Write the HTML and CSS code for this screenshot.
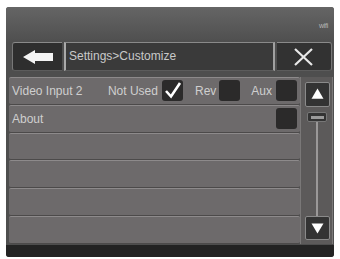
FILE: index.html
```html
<!DOCTYPE html>
<html>
<head>
<meta charset="utf-8">
<link rel="stylesheet" href="styles.css">
</head>
<body>
<div class="screen">
  <div class="status"><span class="wifi">wifi</span></div>
  <div class="nav">
    <div class="back">
      <svg width="50" height="28" viewBox="0 0 50 28"><path d="M10 14 L22 7 L22 10 L40 10 L40 18 L22 18 L22 21 Z" fill="#f4f4f4"/></svg>
    </div>
    <div class="title">Settings&gt;Customize</div>
    <div class="close">
      <svg width="55" height="28" viewBox="0 0 55 28"><path d="M18 6 L35 22 M35 6 L18 22" stroke="#e8e8e8" stroke-width="2.2" fill="none"/></svg>
    </div>
  </div>
  <div class="content">
    <div class="list">
      <div class="row">
        <span class="label">Video Input 2</span>
        <span class="opt opt-nu">Not Used</span>
        <span class="box"><svg width="21" height="21" viewBox="0 0 21 21"><path d="M4 11 L9 16.5 L18 3" stroke="#fff" stroke-width="2.6" fill="none"/></svg></span>
        <span class="opt opt-rev">Rev</span>
        <span class="box"></span>
        <span class="opt opt-aux">Aux</span>
        <span class="box"></span>
      </div>
      <div class="row">
        <span class="label">About</span>
        <span class="box"></span>
      </div>
      <div class="row"></div>
      <div class="row"></div>
      <div class="row"></div>
      <div class="row"></div>
    </div>
    <div class="scroll">
      <div class="sbtn"><svg width="25" height="25" viewBox="0 0 25 25"><path d="M12.5 6 L19 17 L6 17 Z" fill="#fff"/></svg></div>
      <div class="thumb"><span></span></div>
      <div class="track"><span></span></div>
      <div class="sbtn"><svg width="25" height="24" viewBox="0 0 25 24"><path d="M6 7 L19 7 L12.5 18 Z" fill="#fff"/></svg></div>
    </div>
  </div>
  <div class="bottom"></div>
</div>
</body>
</html>
```

FILE: styles.css
```css
html, body {
  margin: 0;
  padding: 0;
  background: #fff;
}
body {
  padding: 7px 0 0 6px;
  font-family: "Liberation Sans", Arial, sans-serif;
}
.screen {
  width: 328px;
  height: 250px;
  background: #4e4e4e;
  border-radius: 3px;
  display: flex;
  flex-direction: column;
  overflow: hidden;
}
.status {
  height: 35px;
  background: linear-gradient(#656565, #4f4f4f);
  display: flex;
  justify-content: flex-end;
  align-items: flex-start;
  padding-right: 6px;
}
.wifi {
  margin-top: 15px;
  font-size: 7px;
  color: #b8b8b8;
  letter-spacing: -0.3px;
}
.nav {
  height: 30px;
  display: flex;
  padding: 0 2px 0 6px;
  gap: 2px;
}
.nav > div {
  box-sizing: border-box;
  height: 29px;
  border-top: 1px solid #8a8a8a;
  border-bottom: 1px solid #5c5c5c;
}
.back {
  width: 50px;
  background: #2e2e2e;
  border-radius: 3px 0 0 3px;
  border-left: 1px solid #777;
}
.back svg, .close svg { display: block; }
.title {
  flex: 1;
  background: #3a3a3a;
  border-left: 2px solid #a9a9a9;
  border-right: 2px solid #a0a0a0;
  color: #c9c9c9;
  font-size: 12px;
  line-height: 27px;
  padding-left: 3px;
}
.close {
  width: 55px;
  background: #323232;
  border-radius: 0 3px 3px 0;
  border-right: 1px solid #777;
}
.content {
  display: flex;
  margin-top: 5px;
  height: 167px;
  padding-left: 3px;
}
.list {
  width: 291px;
  display: flex;
  flex-direction: column;
}
.row {
  box-sizing: border-box;
  height: 27.8px;
  background: #6d6a6b;
  border-top: 1px solid #8d8a8b;
  border-bottom: 1px solid #4c4a4a;
  border-radius: 2px;
  display: flex;
  align-items: center;
  padding: 0 3px 0 3px;
  color: #cfcfcf;
  font-size: 12px;
}
.label { flex: 1; }
.opt { margin-right: 4px; }
.opt-rev { margin-left: 12px; margin-right: 3px; }
.opt-aux { margin-left: 11px; }
.box {
  width: 21px;
  height: 21px;
  background: #2b2a2a;
  border-radius: 3px;
  display: block;
}
.box svg { display: block; }
.scroll {
  width: 33px;
  box-sizing: border-box;
  background: #5c5a5a;
  border-left: 1px solid #7a7878;
  border-right: 1px solid #7a7878;
  display: flex;
  flex-direction: column;
  padding: 5px 3px 4px 4px;
}
.sbtn {
  width: 25px;
  height: 25px;
  box-sizing: border-box;
  background: #333;
  border: 1px solid #8a8a8a;
  border-radius: 2px;
  display: flex;
  align-items: center;
  justify-content: center;
  overflow: hidden;
}
.sbtn:last-child { height: 24px; }
.thumb {
  margin: 5px 2px 0;
  height: 8px;
  background: #333;
  border: 1px solid #777;
  border-radius: 2px;
  display: flex;
  align-items: center;
  justify-content: center;
}
.thumb span {
  width: 13px;
  height: 3px;
  background: #9a9a9a;
}
.track {
  flex: 1;
  display: flex;
  justify-content: center;
}
.track span {
  width: 2px;
  background: #9a9898;
}
.bottom {
  flex: 1;
  margin-top: 1px;
  background: #232323;
}
```
